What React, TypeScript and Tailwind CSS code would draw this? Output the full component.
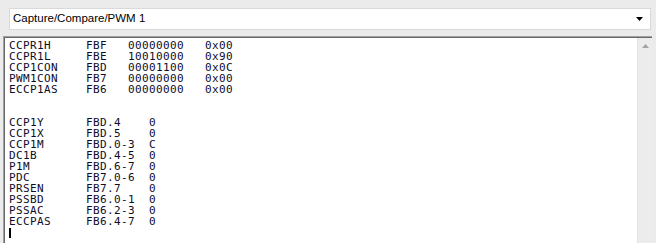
import React from "react";

const regs = [
  ["CCPR1H", "FBF", "00000000", "0x00"],
  ["CCPR1L", "FBE", "10010000", "0x90"],
  ["CCP1CON", "FBD", "00001100", "0x0C"],
  ["PWM1CON", "FB7", "00000000", "0x00"],
  ["ECCP1AS", "FB6", "00000000", "0x00"],
];

const bits = [
  ["CCP1Y", "FBD.4", "0"],
  ["CCP1X", "FBD.5", "0"],
  ["CCP1M", "FBD.0-3", "C"],
  ["DC1B", "FBD.4-5", "0"],
  ["P1M", "FBD.6-7", "0"],
  ["PDC", "FB7.0-6", "0"],
  ["PRSEN", "FB7.7", "0"],
  ["PSSBD", "FB6.0-1", "0"],
  ["PSSAC", "FB6.2-3", "0"],
  ["ECCPAS", "FB6.4-7", "0"],
];

const App = () => {
  const lines = [
    ...regs.map((r) => r[0].padEnd(11) + r[1].padEnd(6) + r[2].padEnd(11) + r[3]),
    "",
    "",
    ...bits.map((b) => b[0].padEnd(11) + b[1].padEnd(9) + b[2]),
  ];

  return (
    <div className="w-[656px] h-[243px] bg-[#ebebeb] flex flex-col pt-[8px] overflow-hidden">
      {/* Dropdown */}
      <div className="ml-[9px] w-[642px] h-[22px] bg-white border border-[#d9d9d9] flex items-center justify-between pl-[3px] pr-[7px]">
        <span className="text-[11.5px] text-black" style={{ fontFamily: '"Liberation Sans", Arial, sans-serif' }}>
          Capture/Compare/PWM 1
        </span>
        <svg width="7" height="4" viewBox="0 0 7 4">
          <path d="M0 0H7L3.5 4Z" fill="#000" />
        </svg>
      </div>

      {/* Text area */}
      <div className="ml-[3px] mt-[6px] w-[649px] flex-1 flex border-t border-l border-[#a0a0a0]">
        <div className="flex-1 flex border-t border-l border-[#696969] bg-white">
          <div
            className="flex-1 pl-[4px] pt-[2px] text-[11px] leading-[11px] tracking-[0.38px] text-[#0d0d2a] whitespace-pre"
            style={{ fontFamily: '"DejaVu Sans Mono", "Liberation Mono", monospace' }}
          >
            {lines.map((l, i) => (
              <div key={i} className="h-[11px]">
                {l}
              </div>
            ))}
            <div className="h-[11px] flex items-center">
              <div className="w-[2px] h-[10px] bg-black" />
            </div>
          </div>
          {/* Scrollbar */}
          <div className="w-[15px] bg-[#ececec] border-l border-[#e2e2e2] flex justify-center pt-[6px]">
            <svg width="7" height="4" viewBox="0 0 7 4">
              <path d="M3.5 0L7 4H0Z" fill="#a3a3a3" />
            </svg>
          </div>
        </div>
      </div>
    </div>
  );
};

export default App;
